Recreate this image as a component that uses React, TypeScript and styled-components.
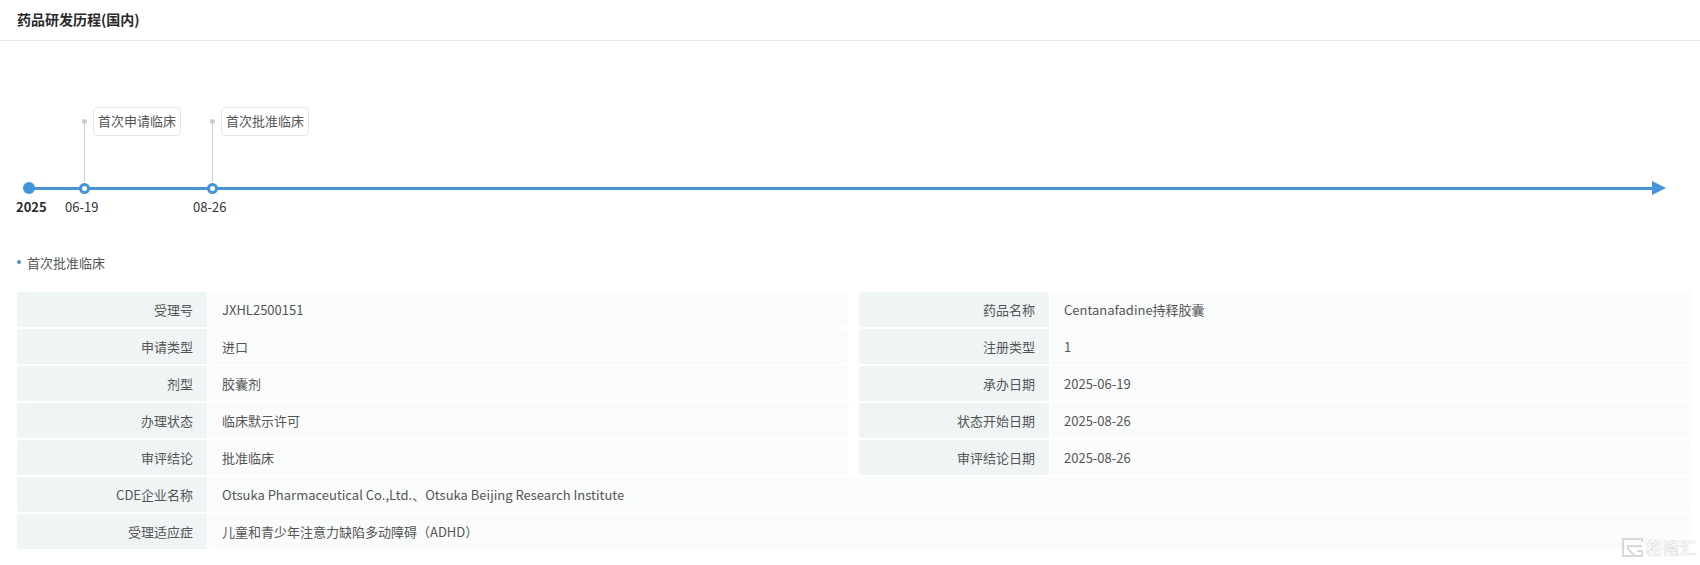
import React from "react";
import styled, { createGlobalStyle } from "styled-components";

const Global = createGlobalStyle`
  html, body { margin: 0; padding: 0; background: #fff; }
  body { font-family: "Noto Sans CJK SC", "Noto Sans", sans-serif; color: #444; width: 1700px; height: 565px; overflow: hidden; position: relative; }
`;

const Header = styled.header`
  height: 41px;
  box-sizing: border-box;
  border-bottom: 1px solid #e8e8e8;
  padding: 0 0 2px 17px;
  display: flex;
  align-items: center;
  font-size: 14px;
  font-weight: 700;
  color: #2a2a2a;
`;

const Timeline = styled.section`
  position: relative;
  display: flex;
  box-sizing: border-box;
  height: 182px;
  margin: 0 17px;
  padding-top: 66px;
`;

const Axis = styled.div`
  position: absolute;
  left: 12px;
  right: 31px;
  top: 146px;
  height: 3px;
  background: #4a94d4;
  &::after {
    content: "";
    position: absolute;
    right: -14px;
    top: -6px;
    border-left: 14px solid #4393dd;
    border-top: 7px solid transparent;
    border-bottom: 7px solid transparent;
  }
`;

const Node = styled.div<{ $width: number; $start?: boolean }>`
  display: flex;
  flex-direction: column;
  flex: none;
  width: ${(p) => p.$width}px;
  margin-left: ${(p) => (p.$start ? "-1px" : "0")};
`;

const Flag = styled.div`
  display: flex;
  align-items: flex-start;
  height: 75px;
  padding-left: 16.5px;
  box-sizing: border-box;
`;

const StemColumn = styled.div`
  display: flex;
  flex-direction: column;
  align-items: center;
  width: 5px;
  height: 100%;
  padding-top: 12px;
  box-sizing: border-box;
`;

const StemDot = styled.div`
  flex: none;
  width: 5px;
  height: 5px;
  border-radius: 50%;
  background: #ccc;
`;

const Stem = styled.div`
  flex: 1;
  width: 1px;
  margin-top: -2px;
  background: #ccc;
`;

const Tag = styled.div`
  margin-left: 6.5px;
  height: 29px;
  box-sizing: border-box;
  padding: 0 4px;
  border: 1px solid #e4e4e4;
  border-radius: 4px;
  font-size: 13px;
  line-height: 26px;
  color: #555;
  white-space: nowrap;
`;

const MarkerSlot = styled.div<{ $start?: boolean }>`
  position: relative;
  display: flex;
  align-items: center;
  justify-content: center;
  width: ${(p) => (p.$start ? "26px" : "38px")};
  height: 12px;
`;

const StartDot = styled.div`
  width: 12px;
  height: 12px;
  border-radius: 50%;
  background: #4393dd;
`;

const Marker = styled.div`
  width: 11px;
  height: 11px;
  box-sizing: border-box;
  border: 3px solid #4393dd;
  border-radius: 50%;
  background: #fff;
`;

const TimeLabel = styled.div<{ $bold?: boolean }>`
  margin-top: 3px;
  font-size: 13px;
  line-height: 20px;
  font-weight: ${(p) => (p.$bold ? 700 : 400)};
  color: ${(p) => (p.$bold ? "#2a2a2a" : "#333")};
  white-space: nowrap;
`;

const Section = styled.div`
  margin: 19px 17px 0;
  display: flex;
  align-items: center;
  height: 40px;
  font-size: 13px;
  color: #555;
`;

const Bullet = styled.span`
  width: 4px;
  height: 4px;
  border-radius: 50%;
  background: #4a94c6;
  margin-right: 6px;
`;

const Grid = styled.div`
  margin: 10px 0 0 17px;
  display: grid;
  grid-template-columns: 831px 832px;
  column-gap: 11px;
  row-gap: 2px;
`;

const Row = styled.div<{ $wide?: boolean }>`
  display: grid;
  grid-template-columns: 190px 1fr;
  height: 35px;
  grid-column: ${(p) => (p.$wide ? "1 / span 2" : "auto")};
  font-size: 13px;
  line-height: 35px;
`;

const Label = styled.div`
  background: #eff5f5;
  border-radius: 3px 0 0 3px;
  text-align: right;
  padding-right: 14px;
  color: #555;
`;

const Value = styled.div`
  background: #fafcfb;
  margin-left: 2px;
  padding-left: 13px;
  border-radius: 0 3px 3px 0;
  color: #555;
`;

const Watermark = styled.div`
  position: absolute;
  right: 3px;
  bottom: 8px;
  display: flex;
  align-items: center;
  gap: 3px;
  color: #fff;
  font-size: 16px;
  line-height: 19px;
  font-weight: 700;
  letter-spacing: 1px;
  -webkit-text-stroke: 0.5px #d8d8d8;
`;

const rows: [string, string, string?, string?][] = [
  ["受理号", "JXHL2500151", "药品名称", "Centanafadine持释胶囊"],
  ["申请类型", "进口", "注册类型", "1"],
  ["剂型", "胶囊剂", "承办日期", "2025-06-19"],
  ["办理状态", "临床默示许可", "状态开始日期", "2025-08-26"],
  ["审评结论", "批准临床", "审评结论日期", "2025-08-26"],
  ["CDE企业名称", "Otsuka Pharmaceutical Co.,Ltd.、Otsuka Beijing Research Institute"],
  ["受理适应症", "儿童和青少年注意力缺陷多动障碍（ADHD）"],
];

const events = [
  { width: 128, date: "06-19", label: "首次申请临床" },
  { width: 128, date: "08-26", label: "首次批准临床" },
];

export default function App() {
  return (
    <>
      <Global />
      <Header>药品研发历程(国内)</Header>
      <Timeline>
        <Axis />
        <Node $start $width={49}>
          <Flag />
          <MarkerSlot $start>
            <StartDot />
          </MarkerSlot>
          <TimeLabel $bold>2025</TimeLabel>
        </Node>
        {events.map((e) => (
          <Node key={e.date} $width={e.width}>
            <Flag>
              <StemColumn>
                <StemDot />
                <Stem />
              </StemColumn>
              <Tag>{e.label}</Tag>
            </Flag>
            <MarkerSlot>
              <Marker />
            </MarkerSlot>
            <TimeLabel>{e.date}</TimeLabel>
          </Node>
        ))}
      </Timeline>
      <Section>
        <Bullet />
        首次批准临床
      </Section>
      <Grid>
        {rows.map(([a, b, c, d]) => (
          <React.Fragment key={a}>
            <Row $wide={!c}>
              <Label>{a}</Label>
              <Value>{b}</Value>
            </Row>
            {c && (
              <Row>
                <Label>{c}</Label>
                <Value>{d}</Value>
              </Row>
            )}
          </React.Fragment>
        ))}
      </Grid>
      <Watermark>
        <svg width="21" height="19" viewBox="0 0 21 19" fill="none" stroke="#d8d8d8" strokeWidth="2">
          <path d="M20 4V1H1v17h11" />
          <path d="M20 8H6v3l7 7h7v-5h-5" />
        </svg>
        格隆汇
      </Watermark>
    </>
  );
}
